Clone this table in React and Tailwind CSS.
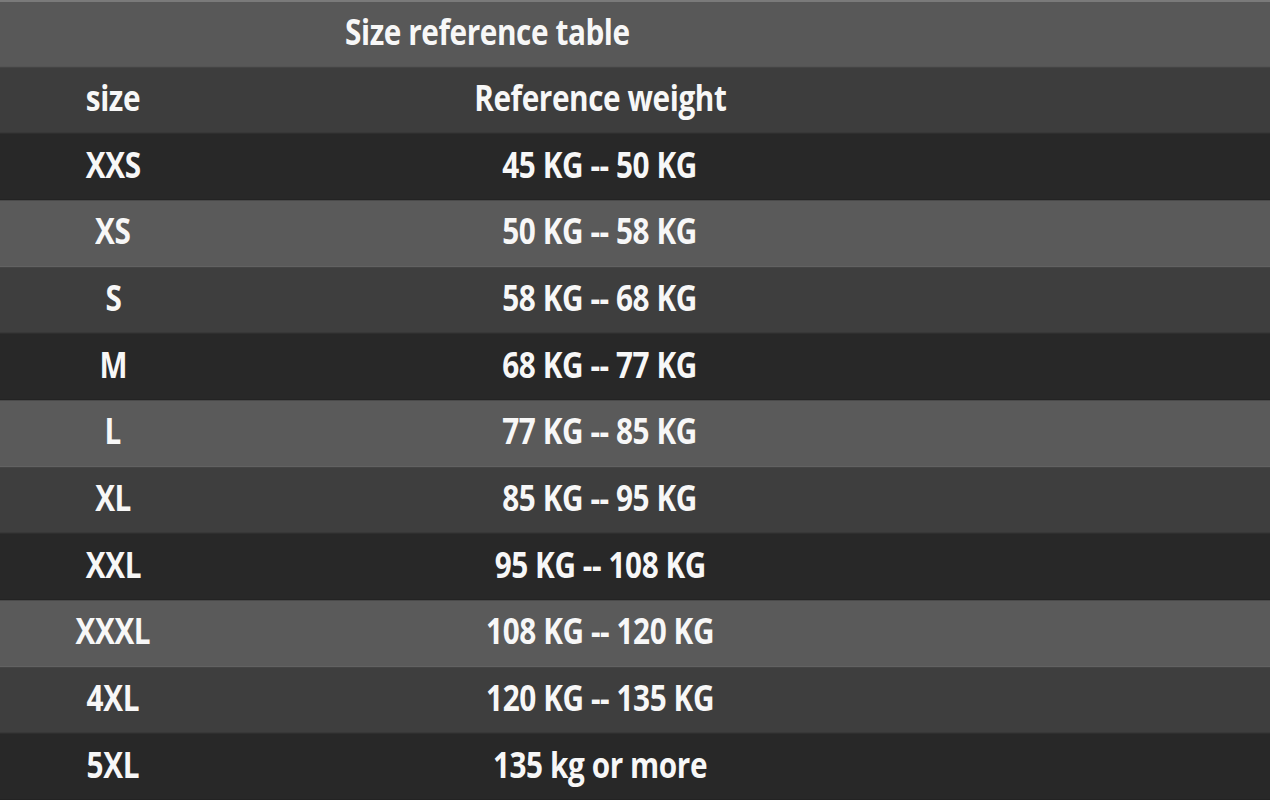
import React from "react"

const rows = [
    { size: "XXS", weight: "45 KG -- 50 KG" },
    { size: "XS", weight: "50 KG -- 58 KG" },
    { size: "S", weight: "58 KG -- 68 KG" },
    { size: "M", weight: "68 KG -- 77 KG" },
    { size: "L", weight: "77 KG -- 85 KG" },
    { size: "XL", weight: "85 KG -- 95 KG" },
    { size: "XXL", weight: "95 KG -- 108 KG" },
    { size: "XXXL", weight: "108 KG -- 120 KG" },
    { size: "4XL", weight: "120 KG -- 135 KG" },
    { size: "5XL", weight: "135 kg or more" },
]

// light, mid, dark repeating (title row is light, header row is mid)
const tones = [
    "bg-[#282828] border-t border-t-[#2e2e2e] border-b border-b-[#232323]",
    "bg-[#5a5a5a] border-t border-t-[#4a4a4a] border-b border-b-[#626262]",
    "bg-[#3e3e3e] border-t border-t-[#444444] border-b border-b-[#383838]",
]

function Label({ children }) {
    return (
        <span className="inline-block scale-x-[0.85] text-[35px] font-bold leading-none tracking-[-0.5px] text-[#f7f7f7] whitespace-nowrap">
            {children}
        </span>
    )
}

function App() {
    return (
        <div className="h-[800px] w-[1270px] grid grid-rows-12 font-['Open_Sans','Liberation_Sans',sans-serif] overflow-hidden">
            <div className="grid grid-cols-[226px_748px_1fr] items-center pb-[5px] bg-[#585858] border-t-2 border-t-[#7a7a7a] border-b border-b-[#545454]">
                <div className="col-span-2 flex justify-center">
                    <Label>Size reference table</Label>
                </div>
            </div>
            <div className="grid grid-cols-[226px_748px_1fr] items-center pb-[5px] bg-[#3d3d3d] border-t border-t-[#444444] border-b border-b-[#383838]">
                <div className="flex justify-center">
                    <Label>size</Label>
                </div>
                <div className="flex justify-center">
                    <Label>Reference weight</Label>
                </div>
            </div>
            {rows.map((item, index) => (
                <div key={index} className={"grid grid-cols-[226px_748px_1fr] items-center pb-[5px] " + tones[index % 3]}>
                    <div className="flex justify-center">
                        <Label>{item.size}</Label>
                    </div>
                    <div className="flex justify-center">
                        <Label>{item.weight}</Label>
                    </div>
                </div>
            ))}
        </div>
    )
}

export default App
